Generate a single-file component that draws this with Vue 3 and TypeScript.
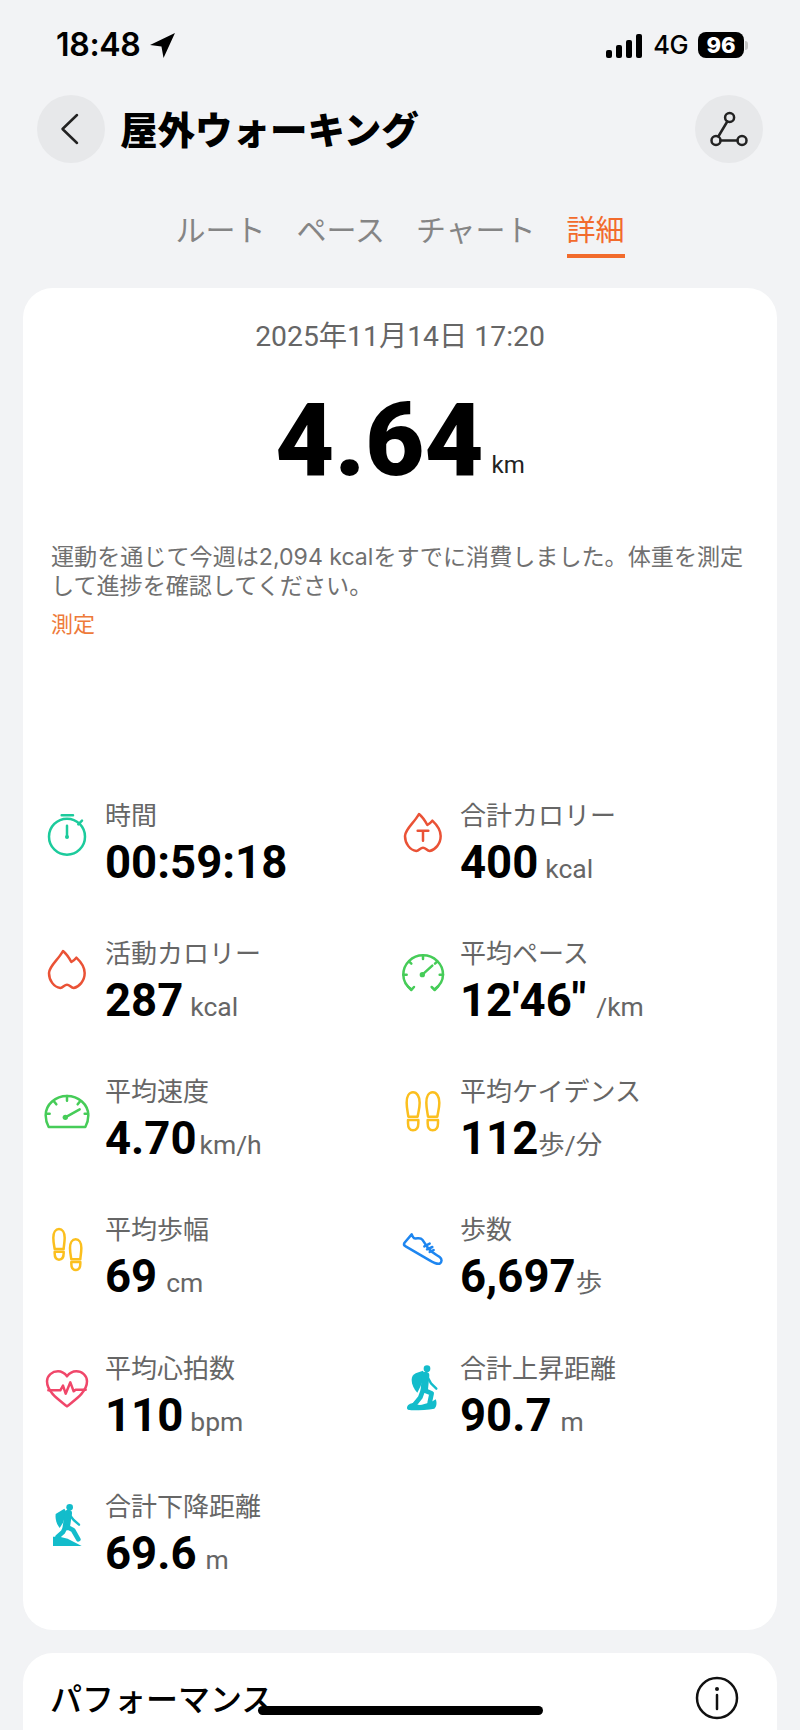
<script setup lang="ts">
interface Stat {
  icon: string
  label: string
  value: string
  unit: string
  gap?: number
}

const tabs: string[] = ['ルート', 'ペース', 'チャート', '詳細']
const bars: number[] = [8, 13, 18, 24]

const stats: Stat[] = [
  { icon: 'timer', label: '時間', value: '00:59:18', unit: '' },
  { icon: 'flameT', label: '合計カロリー', value: '400', unit: 'kcal' },
  { icon: 'flame', label: '活動カロリー', value: '287', unit: 'kcal' },
  { icon: 'pace', label: '平均ペース', value: '12\'46"', unit: '/km', gap: 10 },
  { icon: 'gauge', label: '平均速度', value: '4.70', unit: 'km/h', gap: 3 },
  { icon: 'shoes', label: '平均ケイデンス', value: '112', unit: '歩/分', gap: 0 },
  { icon: 'prints', label: '平均歩幅', value: '69', unit: 'cm', gap: 9 },
  { icon: 'shoe', label: '歩数', value: '6,697', unit: '歩', gap: 0 },
  { icon: 'heart', label: '平均心拍数', value: '110', unit: 'bpm' },
  { icon: 'up', label: '合計上昇距離', value: '90.7', unit: 'm', gap: 9 },
  { icon: 'down', label: '合計下降距離', value: '69.6', unit: 'm', gap: 9 }
]

const viewBoxes: Record<string, string> = {
  timer: '22 38 180 180',
  flameT: '-11 -5 180 180',
  flame: '-8 -2 180 180',
  pace: '34 450 180 180',
  gauge: '22 865 180 180',
  shoes: '36 865 180 180',
  prints: '22 52 180 180',
  shoe: '-13 -12 180 180',
  heart: '22 465 180 180',
  up: '-13 0 180 180',
  down: '-6 -2 180 180'
}

const flamePath =
  'M70 22C80 30 88 42 95 55C100 52 106 47 110 42C124 55 135 70 135 88C135 112 118 130 102 133C94 133 90 123 82 123C74 123 70 133 62 133C42 130 28 110 28 88C28 68 56 48 70 22Z'
</script>

<template>
  <div class="screen">
    <div class="status">
      <div class="status-left">
        <span class="time">18:48</span>
        <svg class="arrow" viewBox="0 0 26 26"><path d="M25 1L1 12.500L12 14L14 25Z" /></svg>
      </div>
      <div class="status-right">
        <div class="signal">
          <i v-for="h in bars" :key="h" :style="{ height: h + 'px' }"></i>
        </div>
        <span class="net">4G</span>
        <span class="battery">96</span>
        <span class="nub"></span>
      </div>
    </div>

    <header class="nav">
      <button class="round">
        <svg viewBox="0 0 68 68" class="round-icon"><path d="M40 20L25.500 34L40 48" /></svg>
      </button>
      <h1>屋外ウォーキング</h1>
      <button class="round">
        <svg viewBox="0 0 68 68" class="round-icon thin">
          <circle cx="34.600" cy="22.500" r="4.500" />
          <circle cx="21" cy="45.500" r="4.500" />
          <circle cx="47" cy="45.500" r="4.500" />
          <path d="M32.300 26.500L23.300 41.500M25.500 45.500H42.500" />
        </svg>
      </button>
    </header>

    <nav class="tabs">
      <span v-for="t in tabs" :key="t" class="tab" :class="{ active: t === '詳細' }">{{ t }}</span>
    </nav>

    <section class="card main">
      <div class="date">2025年11月14日 17:20</div>
      <div class="total"><span class="total-num">4.64</span><span class="total-unit">km</span></div>
      <p class="desc">運動を通じて今週は2,094 kcalをすでに消費しました。体重を測定して進捗を確認してください。</p>
      <div class="link">測定</div>

      <div class="grid">
        <div v-for="s in stats" :key="s.icon" class="stat">
          <svg class="icon" :class="'i-' + s.icon" :viewBox="viewBoxes[s.icon]">
            <template v-if="s.icon === 'timer'">
              <circle cx="112" cy="133" r="54" />
              <path d="M96 69H130M146 96L157 85" />
              <path d="M112 100V134" />
              <circle cx="112" cy="134" r="6" class="solid" />
            </template>
            <template v-else-if="s.icon === 'flameT'">
              <path :d="flamePath" />
              <path d="M66 72H98M82 72V102" />
            </template>
            <template v-else-if="s.icon === 'flame'">
              <path :d="flamePath" />
            </template>
            <template v-else-if="s.icon === 'pace'">
              <path d="M92 589C75 577 68 560 68 545C68 512 95 487 127 487C160 487 187 512 187 545C187 560 178 577 162 589" />
              <path d="M82 581L92 591L100 582M153 582L162 591L172 581" />
              <path d="M127 487V498M85 505L92 512M170 505L163 512M68 545H78M187 545H177" />
              <path d="M125 545L155 518" />
              <circle cx="125" cy="545" r="8" class="solid" />
            </template>
            <template v-else-if="s.icon === 'gauge'">
              <path d="M57 1003C50 990 48 978 48 968C48 935 78 910 112 910C146 910 176 935 176 968C176 978 174 990 167 1003Z" />
              <path d="M112 910V924M72 925L80 935M152 925L144 935M50 963H60M175 963H165" />
              <path d="M107 974L150 950" />
              <circle cx="107" cy="974" r="8" class="solid" />
            </template>
            <template v-else-if="s.icon === 'shoes'">
              <g v-for="dx in [0, 59]" :key="dx" :transform="`translate(${dx} 0)`">
                <path d="M99 899C87 899 80 912 80 930C80 948 84 962 85 972H113C114 962 119 948 119 930C119 912 111 899 99 899Z" />
                <path d="M84 982H115V992C115 1006 108 1013 99 1013C90 1013 84 1006 84 992Z" />
              </g>
            </template>
            <template v-else-if="s.icon === 'prints'">
              <g v-for="d in [[0, 0], [50, 31]]" :key="d[0]" :transform="`translate(${d[0]} ${d[1]})`">
                <path d="M88 82C78 82 71 92 71 108C71 124 74 134 75 142H102C102 134 105 124 105 108C105 92 98 82 88 82Z" />
                <path d="M75 150H102V155C102 168 96 174 88 174C80 174 75 168 75 155Z" />
              </g>
            </template>
            <template v-else-if="s.icon === 'shoe'">
              <path d="M46 34L24 60C22 64 24 68 28 70L100 112C110 118 122 124 130 122C137 118 138 108 130 102C118 94 105 88 95 75L78 50C72 42 62 48 54 46C50 44 48 38 46 34Z" />
              <path d="M84 70L100 62M92 79L108 72M100 87L112 81" />
            </template>
            <template v-else-if="s.icon === 'heart'">
              <path d="M112 610C95 595 52 570 52 535C52 517 68 505 85 505C97 505 106 512 112 520C118 512 127 505 140 505C157 505 172 517 172 535C172 570 129 595 112 610Z" />
              <path d="M56 562H92L100 548L108 572L122 538L132 565L138 560H168" />
            </template>
            <template v-else-if="s.icon === 'up'">
              <circle cx="92" cy="32" r="10" class="solid" />
              <path class="solid" d="M58 46L80 38L86 50L72 86L63 104C53 94 46 80 46 66C46 56 50 50 58 46Z" />
              <path class="thick" d="M88 52L84 94" />
              <path class="limb" d="M82 96L106 106L100 134" />
              <path class="limb" d="M80 96L72 118L56 138" />
              <path class="arm" d="M92 54L104 76L120 92" />
              <path class="solid" d="M32 150C32 140 42 136 52 134C62 142 72 142 84 138C94 136 108 132 118 124C122 132 122 146 114 152C90 156 50 158 38 156C34 155 32 153 32 150Z" />
            </template>
            <template v-else>
              <circle cx="92" cy="32" r="10" class="solid" />
              <path class="solid" d="M50 52L76 36L82 47L72 78L62 94C54 84 48 70 50 52Z" />
              <path class="thick" d="M88 50L82 90" />
              <path class="limb" d="M80 90L72 106L56 120" />
              <path class="limb" d="M82 90L102 100L118 128" />
              <path class="arm" d="M90 52L104 70L120 84" />
              <path class="solid" d="M42 120H62L86 126L128 148H42Z" />
            </template>
          </svg>
          <div class="stat-text">
            <div class="label">{{ s.label }}</div>
            <div class="value">
              <span class="num">{{ s.value }}</span><span v-if="s.unit" class="unit" :style="{ marginLeft: (s.gap ?? 7) + 'px' }">{{ s.unit }}</span>
            </div>
          </div>
        </div>
      </div>
    </section>

    <section class="card perf">
      <h2>パフォーマンス</h2>
      <svg class="info" viewBox="0 0 44 44">
        <circle cx="22" cy="22" r="20" />
        <circle cx="22" cy="13" r="2" class="dot" />
        <path d="M22 19V33" />
      </svg>
    </section>

    <div class="home"></div>
  </div>
</template>

<style>
html,
body {
  margin: 0;
  background: #f2f3f5;
}
</style>

<style scoped>
.screen {
  position: relative;
  width: 800px;
  height: 1730px;
  overflow: hidden;
  background: #f2f3f5;
  font-family: Roboto, "Noto Sans CJK JP", sans-serif;
  color: #000;
}
.status {
  box-sizing: border-box;
  height: 95px;
  padding: 32px 52px 0 56px;
  display: flex;
  justify-content: space-between;
  align-items: flex-start;
}
.status-left {
  display: flex;
  align-items: center;
  height: 26px;
  gap: 8px;
}
.time {
  font-family: Inter, sans-serif;
  font-weight: 600;
  font-size: 32px;
  line-height: 26px;
  letter-spacing: -0.3px;
}
.arrow {
  width: 27px;
  height: 27px;
  fill: #000;
}
.status-right {
  display: flex;
  align-items: center;
  height: 26px;
}
.signal {
  display: flex;
  align-items: flex-end;
  gap: 4px;
  height: 25px;
  margin-right: 2px;
}
.signal i {
  display: block;
  width: 6px;
  border-radius: 2px;
  background: #000;
}
.net {
  margin-left: 9px;
  font-family: Inter, sans-serif;
  font-size: 25.500px;
  font-weight: 500;
  line-height: 26px;
  letter-spacing: -0.5px;
}
.battery {
  margin-left: 10px;
  width: 46px;
  height: 26px;
  border-radius: 8px;
  background: #000;
  color: #fff;
  font-family: Inter, sans-serif;
  font-weight: 800;
  font-size: 22px;
  line-height: 26px;
  text-align: center;
}
.nub {
  width: 3px;
  height: 9px;
  margin-left: 1px;
  border-radius: 0 3px 3px 0;
  background: #c4c4c4;
}
.nav {
  display: flex;
  align-items: center;
  height: 68px;
  padding: 0 37px 0 37px;
}
.round {
  width: 68px;
  height: 68px;
  padding: 0;
  border: 0;
  border-radius: 50%;
  background: #e7e8ea;
}
.round-icon {
  display: block;
  width: 68px;
  height: 68px;
  fill: none;
  stroke: #222;
  stroke-width: 2.500;
  stroke-linecap: round;
  stroke-linejoin: round;
}
.nav h1 {
  flex: 1;
  margin: -3px 0 0 15px;
  font-family: "Noto Sans CJK JP", sans-serif;
  font-size: 37.500px;
  font-weight: 900;
  line-height: 68px;
}
.tabs {
  display: flex;
  justify-content: center;
  align-items: flex-end;
  gap: 31px;
  margin-top: 44px;
}
.tab {
  padding-bottom: 5px;
  border-bottom: 4px solid transparent;
  font-family: "Noto Sans CJK JP", sans-serif;
  font-size: 30px;
  line-height: 42px;
  color: #858585;
}
.tab.active {
  font-size: 29px;
  color: #f26b2c;
  border-bottom-color: #f26b2c;
}
.card {
  margin: 0 23px;
  background: #fff;
  border-radius: 30px;
}
.main {
  box-sizing: border-box;
  height: 1342px;
  margin-top: 30px;
  padding: 31px 0 0;
}
.date {
  text-align: center;
  font-size: 28.300px;
  line-height: 36px;
  color: #666;
}
.total {
  margin-top: 30px;
  text-align: center;
  line-height: 110px;
  height: 110px;
}
.total-num {
  font-size: 102px;
  font-weight: 900;
}
.total-unit {
  margin-left: 8px;
  font-size: 24px;
  color: #222;
  vertical-align: 2px;
}
.desc {
  margin: 48px 0 0;
  padding: 0 28px;
  font-family: Inter, "Noto Sans CJK JP", sans-serif;
  font-size: 23.100px;
  line-height: 29px;
  color: #707070;
}
.link {
  margin: 8.500px 0 0 28px;
  font-size: 22px;
  line-height: 30px;
  color: #ee7a3a;
}
.grid {
  display: grid;
  grid-template-columns: 355px 355px;
  grid-auto-rows: 138.300px;
  margin-top: 159px;
  padding-left: 14px;
}
.stat {
  display: flex;
  align-items: flex-start;
  gap: 8px;
}
.icon {
  flex: none;
  width: 60px;
  height: 60px;
  margin-top: 6px;
  fill: none;
  stroke-width: 7.500;
  stroke-linecap: round;
  stroke-linejoin: round;
}
.icon .solid {
  fill: currentColor;
  stroke: none;
}
.i-timer {
  stroke: #1ccb9c;
  color: #1ccb9c;
}
.i-flameT,
.i-flame {
  stroke: #ea5236;
  color: #ea5236;
}
.i-pace,
.i-gauge {
  stroke: #46cc58;
  color: #46cc58;
}
.i-shoes,
.i-prints {
  stroke: #fbbf1e;
  color: #fbbf1e;
}
.i-shoe {
  stroke: #1e86f0;
  color: #1e86f0;
}
.i-heart {
  stroke: #f0476a;
  color: #f0476a;
}
.i-up,
.i-down {
  stroke: #13bccb;
  color: #13bccb;
}
.icon .thick {
  stroke-width: 22;
}
.icon .limb {
  stroke-width: 14;
}
.icon .arm {
  stroke-width: 7;
}
.label {
  font-size: 26px;
  line-height: 34px;
  color: #666;
  white-space: nowrap;
}
.value {
  display: flex;
  align-items: baseline;
  margin-top: 2px;
  line-height: 56px;
}
.num {
  font-size: 45.500px;
  font-weight: 700;
}
.unit {
  font-size: 26.500px;
  color: #666;
}
.perf {
  display: flex;
  justify-content: space-between;
  align-items: flex-start;
  height: 120px;
  margin-top: 23px;
  padding: 23px 38px 0 27px;
}
.perf h2 {
  margin: 0;
  font-family: "Noto Sans CJK JP", sans-serif;
  font-size: 32px;
  font-weight: 500;
  line-height: 42px;
}
.info {
  width: 44px;
  height: 44px;
  fill: none;
  stroke: #111;
  stroke-width: 2.500;
  stroke-linecap: round;
}
.info .dot {
  fill: #111;
  stroke: none;
}
.home {
  position: absolute;
  left: 258px;
  top: 1706px;
  width: 285px;
  height: 9px;
  border-radius: 5px;
  background: #000;
}
</style>
